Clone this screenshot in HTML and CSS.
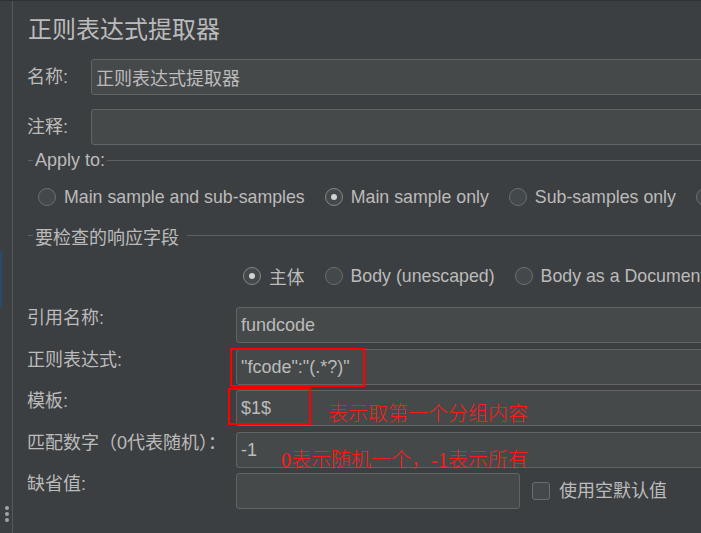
FILE: index.html
```html
<!DOCTYPE html>
<html lang="zh-CN">
<head>
<meta charset="utf-8">
<title>正则表达式提取器</title>
<link rel="stylesheet" href="styles.css">
</head>
<body>
<div class="app">
  <aside class="rail">
    <span class="rail-mark"></span>
    <span class="rail-dots"><i></i><i></i><i></i></span>
  </aside>
  <main class="panel">
    <h1 class="title">正则表达式提取器</h1>

    <div class="row row-top">
      <span class="lbl lbl-short">名称:</span>
      <div class="field">正则表达式提取器</div>
    </div>
    <div class="row row-top row-gap">
      <span class="lbl lbl-short">注释:</span>
      <div class="field"></div>
    </div>

    <div class="group group-apply">
      <span class="gline gline-lead"></span>
      <span class="gtext">Apply to:</span>
      <span class="gline gline-fill"></span>
    </div>
    <div class="radios radios-apply">
      <span class="opt"><span class="radio"></span>Main sample and sub-samples</span>
      <span class="opt"><span class="radio on"></span>Main sample only</span>
      <span class="opt"><span class="radio"></span>Sub-samples only</span>
      <span class="opt"><span class="radio"></span></span>
    </div>

    <div class="group group-field">
      <span class="gline gline-lead"></span>
      <span class="gtext gtext-cjk">要检查的响应字段</span>
      <span class="gline gline-fill"></span>
    </div>
    <div class="radios radios-field">
      <span class="opt"><span class="radio on"></span>主体</span>
      <span class="opt"><span class="radio"></span>Body (unescaped)</span>
      <span class="opt"><span class="radio"></span>Body as a Document</span>
    </div>

    <div class="form">
      <div class="frow">
        <span class="lbl lbl-form">引用名称:</span>
        <div class="field">fundcode</div>
      </div>
      <div class="frow frow-b">
        <span class="lbl lbl-form">正则表达式:</span>
        <div class="field">"fcode":"(.*?)"</div>
      </div>
      <div class="frow frow-a">
        <span class="lbl lbl-form">模板:</span>
        <div class="field">$1$</div>
      </div>
      <div class="frow frow-b">
        <span class="lbl lbl-form">匹配数字（0代表随机）：</span>
        <div class="field">-1</div>
      </div>
      <div class="frow frow-a">
        <span class="lbl lbl-form">缺省值:</span>
        <div class="field field-short"></div>
        <span class="check"></span>
        <span class="check-text">使用空默认值</span>
      </div>
    </div>
  </main>
</div>

<div class="notes">
  <span class="mark mark-regex"></span>
  <span class="mark mark-tpl"></span>
  <span class="note note-tpl">表示取第一个分组内容</span>
  <span class="note note-num">0表示随机一个，-1表示所有</span>
</div>
</body>
</html>
```

FILE: styles.css
```css
* {
  box-sizing: border-box;
  margin: 0;
  padding: 0;
}

html,
body {
  width: 701px;
  height: 533px;
  overflow: hidden;
  background: #3c3f41;
}

body {
  position: relative;
  font-family: "Liberation Sans", "Noto Sans CJK SC", sans-serif;
  font-size: 18px;
  color: #bbbbbb;
}

.app {
  display: flex;
  height: 533px;
  border-top: 1px solid #2f3133;
}

/* left rail */
.rail {
  flex: none;
  width: 13px;
  border-right: 1px solid #55585a;
  display: flex;
  flex-direction: column;
}

.rail-mark {
  width: 2px;
  height: 56px;
  margin-top: 250px;
  background: #2b4a66;
}

.rail-dots {
  margin-top: auto;
  margin-bottom: 11px;
  padding-left: 5px;
  display: flex;
  flex-direction: column;
  gap: 2px;
}

.rail-dots i {
  display: block;
  width: 4px;
  height: 4px;
  border-radius: 50%;
  background: #a3a5a7;
}

/* main panel */
.panel {
  flex: none;
  width: 800px;
  padding-left: 14px;
  display: flex;
  flex-direction: column;
}

.title {
  font-size: 24px;
  font-weight: normal;
  line-height: 30px;
  padding-top: 14px;
  margin-left: 1px;
  color: #bbbbbb;
}

.row {
  display: flex;
  align-items: center;
}

.row-top {
  margin-top: 14px;
}

.lbl {
  flex: none;
  white-space: nowrap;
  line-height: 22px;
}

.lbl-short {
  width: 64px;
}

.field {
  flex: 1;
  height: 36px;
  border: 1px solid #646464;
  border-radius: 3px;
  background: #45494a;
  padding: 0 4px;
  display: flex;
  align-items: center;
  white-space: nowrap;
  color: #bbbbbb;
}

/* titled groups */
.group {
  display: flex;
  align-items: center;
  height: 21px;
  margin-left: 1px;
}

.group-apply {
  margin-top: 5px;
}

.group-field {
  margin-top: 16px;
}

.gline {
  height: 1px;
  background: #5e6163;
}

.gline-lead {
  width: 5px;
  flex: none;
}

.gline-fill {
  flex: 1;
}

.gtext {
  margin: 0 2px;
  white-space: nowrap;
}

.gtext-cjk {
  margin-right: 8px;
}

/* radio rows */
.radios {
  display: flex;
  align-items: center;
  height: 24px;
  gap: 20px;
  white-space: nowrap;
  font-size: 17.75px;
}

.radios-apply {
  margin-top: 14px;
  padding-left: 11px;
}

.radios-field {
  margin-top: 18px;
  padding-left: 216px;
}

.opt {
  flex: none;
  display: flex;
  align-items: center;
  gap: 8px;
}

.radio {
  flex: none;
  width: 18px;
  height: 18px;
  border-radius: 50%;
  border: 1px solid #6b6e70;
  background: #43494a;
  display: flex;
  align-items: center;
  justify-content: center;
}

.radio.on {
  border-color: #85888a;
}

.radio.on::after {
  content: "";
  width: 6px;
  height: 6px;
  border-radius: 50%;
  background: #d2d2d2;
}

/* form rows */
.form {
  margin-top: 19px;
  display: flex;
  flex-direction: column;
}

.frow {
  display: flex;
  align-items: center;
}

.frow-b {
  margin-top: 6px;
}

.frow-a {
  margin-top: 5px;
}

.lbl-form {
  width: 209px;
  align-self: flex-start;
}

.field-short {
  flex: none;
  width: 284px;
}

.check {
  flex: none;
  width: 18px;
  height: 18px;
  margin-left: 12px;
  border: 1px solid #6b6e70;
  border-radius: 3px;
  background: #43494a;
}

.check-text {
  margin-left: 9px;
  white-space: nowrap;
  line-height: 22px;
}

/* red annotations drawn over the form */
.notes {
  position: absolute;
  left: 0;
  top: 0;
  width: 701px;
  height: 533px;
  pointer-events: none;
}

.mark {
  position: absolute;
  border: 2px solid #ff0000;
}

.mark-regex {
  left: 230px;
  top: 348px;
  width: 135px;
  height: 39px;
}

.mark-tpl {
  left: 228px;
  top: 388px;
  width: 83px;
  height: 37px;
}

.note {
  position: absolute;
  font-family: "Liberation Serif", "Noto Sans CJK SC", serif;
  font-size: 20px;
  line-height: 24px;
  color: #ff1a1a;
  white-space: nowrap;
  font-weight: 300;
}

.note-tpl {
  left: 328px;
  top: 402px;
}

.note-num {
  left: 281px;
  top: 448px;
}
```
